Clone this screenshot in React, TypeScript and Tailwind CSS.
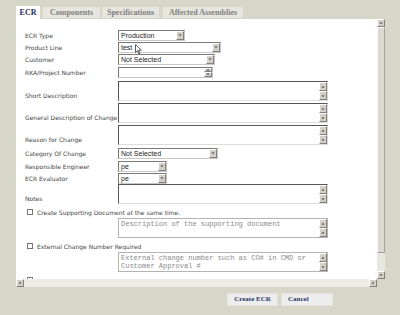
import React from "react";

const label = "text-[6px] text-[#444] [font-family:'DejaVu_Sans',Verdana,sans-serif] whitespace-nowrap";

function Arrow({ dir }: { dir: "up" | "down" | "left" | "right" }) {
  const pts =
    dir === "down"
      ? "1.5,2.5 4.5,2.5 3,4"
      : dir === "up"
      ? "1.5,3.5 4.5,3.5 3,2"
      : dir === "left"
      ? "3.5,1.5 3.5,4.5 2,3"
      : "2.5,1.5 2.5,4.5 4,3";
  return (
    <svg width="6" height="6" viewBox="0 0 6 6">
      <polygon points={pts} fill="#333" />
    </svg>
  );
}

function Btn({ dir, className = "" }: { dir: "up" | "down" | "left" | "right"; className?: string }) {
  return (
    <div
      className={`flex items-center justify-center bg-[#d4d0c8] border border-t-white border-l-white border-b-[#808080] border-r-[#808080] ${className}`}
    >
      <Arrow dir={dir} />
    </div>
  );
}

function Select({ value, width }: { value: string; width: number }) {
  return (
    <div
      className="h-[11px] flex bg-white border border-t-[#7a7a7a] border-l-[#7a7a7a] border-b-[#c8c8c8] border-r-[#c8c8c8]"
      style={{ width }}
    >
      <div className="flex-1 pl-[2px] text-[7px] leading-[9px] text-[#222] [font-family:'Liberation_Sans',Arial,sans-serif]">
        {value}
      </div>
      <Btn dir="down" className="w-[8px] h-[9px]" />
    </div>
  );
}

function TextArea({ width = 210, placeholder, light }: { width?: number; placeholder?: string[]; light?: boolean }) {
  return (
    <div
      className={`h-[20px] flex bg-white border ${
        light
          ? "border-[#b4b4b4]"
          : "border-t-[#555] border-l-[#555] border-b-[#dcdcdc] border-r-[#dcdcdc]"
      }`}
      style={{ width }}
    >
      <div className="flex-1 pl-[2px] pt-[1px] text-[7px] leading-[8px] text-[#8a8a8a] [font-family:'Liberation_Mono','Courier_New',monospace] whitespace-pre overflow-hidden">
        {placeholder?.map((l) => (
          <div key={l}>{l}</div>
        ))}
      </div>
      <div className="flex flex-col w-[8px]">
        <Btn dir="up" className="h-[9px]" />
        <Btn dir="down" className="h-[9px]" />
      </div>
    </div>
  );
}

function Row({ name, children, className = "", end }: { name: string; children: React.ReactNode; className?: string; end?: boolean }) {
  return (
    <div className={`flex ${end ? "items-end" : "items-center"} ${className}`}>
      <div className={`w-[93px] ${label} ${end ? "pb-[1px]" : ""}`}>{name}</div>
      {children}
    </div>
  );
}

function Check({ text, className = "" }: { text: string; className?: string }) {
  return (
    <div className={`flex items-center h-[8px] pl-[2px] ${className}`}>
      <div className="w-[6px] h-[6px] border border-[#777] bg-white" />
      <span className={`${label} ml-[4px]`}>{text}</span>
    </div>
  );
}

export default function App() {
  const tabs = [
    { t: "Components", w: 57, ml: 3 },
    { t: "Specifications", w: 57, ml: 2 },
    { t: "Affected Assemblies", w: 80, ml: 4 },
  ];
  return (
    <div className="w-[400px] h-[315px] bg-[#d7d7c9] overflow-hidden relative">
      <div className="flex items-end h-[19px] pl-[16px]">
        <div className="w-[24px] h-[13px] bg-white flex items-center justify-center text-[8px] font-bold text-[#1f2f5f] [font-family:'Liberation_Serif',Georgia,serif]">
          ECR
        </div>
        {tabs.map((tab) => (
          <div
            key={tab.t}
            className="h-[11px] mb-[1px] bg-[#e6e6de] flex items-center justify-center text-[8px] font-bold text-[#808080] [font-family:'Liberation_Serif',Georgia,serif] whitespace-nowrap"
            style={{ width: tab.w, marginLeft: tab.ml }}
          >
            {tab.t}
          </div>
        ))}
      </div>

      <div className="ml-[16px] w-[369px] h-[260px] flex">
        <div className="flex-1 bg-white overflow-hidden pt-[10px] pl-[9px]">
          <Row name="ECR Type" className="h-[12px]">
            <Select value="Production" width={67} />
          </Row>
          <Row name="Product Line" className="h-[12px]">
            <Select value="test" width={103} />
          </Row>
          <Row name="Customer" className="h-[12px]">
            <Select value="Not Selected" width={97} />
          </Row>
          <Row name="RKA/Project Number" className="h-[12px] mt-[1px]">
            <div className="w-[95px] h-[11px] flex bg-white border border-t-[#7a7a7a] border-l-[#7a7a7a] border-b-[#c8c8c8] border-r-[#c8c8c8]">
              <div className="flex-1" />
              <div className="flex flex-col w-[8px]">
                <Btn dir="up" className="h-[4.5px]" />
                <Btn dir="down" className="h-[4.5px]" />
              </div>
            </div>
          </Row>
          <Row name="Short Description" end className="mt-[3px]">
            <TextArea />
          </Row>
          <Row name="General Description of Change" end className="mt-[2px]">
            <TextArea />
          </Row>
          <Row name="Reason for Change" end className="mt-[2px]">
            <TextArea />
          </Row>
          <Row name="Category Of Change" className="h-[12px] mt-[2px]">
            <Select value="Not Selected" width={100} />
          </Row>
          <Row name="Responsible Engineer" className="h-[12px] mt-[1px]">
            <Select value="pe" width={49} />
          </Row>
          <Row name="ECR Evaluator" className="h-[12px]">
            <Select value="pe" width={49} />
          </Row>
          <Row name="Notes" end>
            <TextArea />
          </Row>
          <Check text="Create Supporting Document at the same time." className="mt-[4px]" />
          <div className="ml-[93px] mt-[2px]">
            <TextArea light placeholder={["Description of the supporting document"]} />
          </div>
          <Check text="External Change Number Required" className="mt-[4px]" />
          <div className="ml-[93px] mt-[2px]">
            <TextArea light placeholder={["External change number such as CO# in CMD or", "Customer Approval #"]} />
          </div>
          <Check text="" className="mt-[4px]" />
        </div>
        <div className="w-[8px] flex flex-col bg-[#e9e7e1]">
          <Btn dir="up" className="h-[8px]" />
          <div className="h-[226px] bg-[#dcd9d2] border border-t-white border-l-white border-b-[#a0a0a0] border-r-[#a0a0a0]" />
          <div className="flex-1" />
          <Btn dir="down" className="h-[8px]" />
        </div>
      </div>

      <div className="ml-[16px] w-[361px] h-[8px] flex bg-[#ecebe6]">
        <Btn dir="left" className="w-[8px]" />
        <div className="flex-1" />
        <Btn dir="right" className="w-[8px]" />
      </div>

      <div className="flex pl-[227px] mt-[6px]">
        <div className="w-[51px] h-[13px] bg-[#ededed] border border-[#e2e2e2] flex items-center justify-center text-[7px] font-bold text-[#2a3a6a] [font-family:'Liberation_Serif',Georgia,serif]">
          Create ECR
        </div>
        <div className="ml-[3px] w-[52px] h-[13px] bg-[#ededed] border border-[#e2e2e2] flex items-center pl-[6px] text-[7px] font-bold text-[#2a3a6a] [font-family:'Liberation_Serif',Georgia,serif]">
          Cancel
        </div>
      </div>

      <svg className="absolute left-[135px] top-[44px]" width="7" height="11" viewBox="0 0 7 11">
        <path d="M0.5 0.5 L0.5 8.5 L2.5 6.5 L4 10 L5 9.5 L3.6 6.2 L6.3 6.2 Z" fill="white" stroke="#333" strokeWidth="0.8" />
      </svg>
    </div>
  );
}
